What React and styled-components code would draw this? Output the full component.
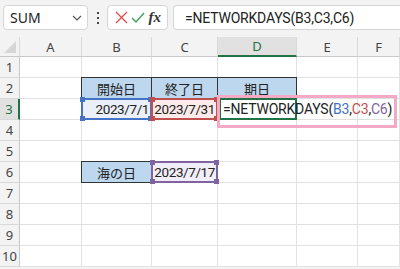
import React from 'react'
import styled, { createGlobalStyle } from 'styled-components'

const Global = createGlobalStyle`
  body { margin: 0; background: #fff; }
  * { box-sizing: border-box; }
`

const Page = styled.div`
  width: 400px;
  height: 269px;
  overflow: hidden;
  background: #f3f3f3;
  font-family: Roboto, 'Noto Sans CJK JP', sans-serif;
  color: #222;
`

const Toolbar = styled.div`
  height: 37px;
  display: flex;
  align-items: center;
  padding: 0 0 2px 3px;
`

const Box = styled.div`
  height: 25px;
  background: #fff;
  border: 1px solid #d6d6d6;
  border-radius: 4px;
  display: flex;
  align-items: center;
`

const NameBox = styled(Box)`
  width: 85px;
  padding: 0 5px 0 6px;
  justify-content: space-between;
  font-size: 14px;
  font-family: 'Noto Sans', sans-serif;
`

const Dots = styled.div`
  width: 19px;
  display: flex;
  flex-direction: column;
  align-items: center;
  gap: 3px;
  span { width: 2px; height: 2px; background: #444; }
`

const FxBox = styled(Box)`
  width: 61px;
  padding: 0 6px 0 7px;
  justify-content: space-between;
`

const Fx = styled.span`
  font-family: 'Liberation Serif', serif;
  font-style: italic;
  font-weight: bold;
  font-size: 15px;
  color: #333;
`

const FormulaBox = styled(Box)`
  flex: 1;
  margin-left: 5px;
  border-right: none;
  border-radius: 4px 0 0 4px;
  padding-left: 11px;
  font-size: 14px;
  letter-spacing: -0.2px;
  color: #222;
`

const Grid = styled.div`
  display: grid;
  grid-template-columns: 20px 62px 70px 66px 79px 61px 42px;
  grid-template-rows: 20px repeat(10, 21px);
  background: #fff;
`

const Corner = styled.div`
  background: #f3f3f3;
  border-right: 1px solid #d8d8d8;
  border-bottom: 1px solid #c8c8c8;
  position: relative;
  &::after {
    content: '';
    position: absolute;
    right: 3px;
    bottom: 3px;
    border-left: 12px solid transparent;
    border-bottom: 12px solid #d6d6d6;
  }
`

const ColHead = styled.div`
  background: ${p => (p.$active ? '#e1e1e1' : '#f3f3f3')};
  border-right: 1px solid #d8d8d8;
  border-bottom: ${p => (p.$active ? '2px solid #217346' : '1px solid #c8c8c8')};
  display: flex;
  align-items: center;
  justify-content: center;
  font-size: 13px;
  font-family: 'Noto Sans', sans-serif;
  color: ${p => (p.$active ? '#217346' : '#444')};
`

const RowHead = styled.div`
  background: ${p => (p.$active ? '#e1e1e1' : '#f3f3f3')};
  border-right: ${p => (p.$active ? '2px solid #217346' : '1px solid #c8c8c8')};
  border-bottom: 1px solid #d8d8d8;
  display: flex;
  align-items: center;
  justify-content: center;
  font-size: 13px;
  font-family: 'Noto Sans', sans-serif;
  color: ${p => (p.$active ? '#217346' : '#444')};
`

const Cell = styled.div`
  border-right: 1px solid #e1e1e1;
  border-bottom: 1px solid #e1e1e1;
  font-size: 14px;
  display: flex;
  align-items: center;
  white-space: nowrap;
  position: relative;
`

const Label = styled(Cell)`
  background: #bdd7ee;
  border: 1px solid #333;
  margin: -1px 0 0 -1px;
  justify-content: center;
  font-size: 13px;
  color: #222;
`

const Ref = styled(Cell)`
  background: ${p => p.$fill};
  border: 2px solid ${p => p.$color};
  margin: -1px 0 0 -1px;
  justify-content: flex-end;
  padding-right: 1px;
  z-index: 2;
  overflow: visible;
  font-size: 13.5px;
  letter-spacing: -0.4px;
`

const Handle = styled.span`
  position: absolute;
  width: 5px;
  height: 5px;
  background: ${p => p.$color};
  ${p => (p.$top ? 'top: -3px;' : 'bottom: -3px;')}
  ${p => (p.$left ? 'left: -3px;' : 'right: -3px;')}
`

const Active = styled(Cell)`
  border: 2px solid #217346;
  margin: -1px 0 0 1px;
  z-index: 3;
  overflow: visible;
  padding-left: 2px;
  font-size: 14px;
  letter-spacing: -0.2px;
  color: #222;
`

const EditBox = styled.div`
  position: absolute;
  left: -4px;
  top: -5px;
  width: 180px;
  height: 33px;
  border: 3px solid #f4a9c4;
  pointer-events: none;
`

const Caret = styled.span`
  display: inline-block;
  width: 1px;
  height: 17px;
  background: #000;
  margin-left: 2px;
`

const Token = styled.span`
  color: ${p => p.$color};
`

const refs = {
  B3: { color: '#4472c4', fill: '#eaeff8' },
  C3: { color: '#c0504d', fill: '#fbeaea' },
  C6: { color: '#8064a2', fill: '#f2eef8' },
}

function RefCell({ id, children }) {
  const { color, fill } = refs[id]
  return (
    <Ref $color={color} $fill={fill}>
      {children}
      <Handle $color={color} $top $left />
      <Handle $color={color} $top />
      <Handle $color={color} $left />
      <Handle $color={color} />
    </Ref>
  )
}

const cols = ['A', 'B', 'C', 'D', 'E', 'F']

function renderRow(r) {
  const out = [<RowHead key={`h${r}`} $active={r === 3}>{r}</RowHead>]
  const push = (c, el) => out.push(React.cloneElement(el, { key: `${c}${r}` }))
  cols.forEach(c => {
    if (r === 2 && c === 'B') return push(c, <Label>開始日</Label>)
    if (r === 2 && c === 'C') return push(c, <Label>終了日</Label>)
    if (r === 2 && c === 'D') return push(c, <Label>期日</Label>)
    if (r === 6 && c === 'B') return push(c, <Label>海の日</Label>)
    if (r === 3 && c === 'B') return push(c, <RefCell id="B3">2023/7/1</RefCell>)
    if (r === 3 && c === 'C') return push(c, <RefCell id="C3">2023/7/31</RefCell>)
    if (r === 6 && c === 'C') return push(c, <RefCell id="C6">2023/7/17</RefCell>)
    if (r === 3 && c === 'D')
      return push(
        c,
        <Active>
          <span>
            =NETWORKDAYS(<Token $color="#4472c4">B3</Token>,<Token $color="#c0504d">C3</Token>,
            <Token $color="#8064a2">C6</Token>)
          </span>
          <Caret />
          <EditBox />
        </Active>
      )
    return push(c, <Cell />)
  })
  return out
}

export default function App() {
  return (
    <Page>
      <Global />
      <Toolbar>
        <NameBox>
          <span>SUM</span>
          <svg width="10" height="6" viewBox="0 0 10 6">
            <path d="M1 1l4 4 4-4" fill="none" stroke="#555" strokeWidth="1.2" />
          </svg>
        </NameBox>
        <Dots>
          <span />
          <span />
          <span />
        </Dots>
        <FxBox>
          <svg width="13" height="13" viewBox="0 0 13 13">
            <path d="M1 1l11 11M12 1L1 12" stroke="#e04b4b" strokeWidth="1.3" />
          </svg>
          <svg width="14" height="12" viewBox="0 0 14 12">
            <path d="M1 6l4 4L13 1" fill="none" stroke="#3aa05a" strokeWidth="1.3" />
          </svg>
          <Fx>fx</Fx>
        </FxBox>
        <FormulaBox>=NETWORKDAYS(B3,C3,C6)</FormulaBox>
      </Toolbar>
      <Grid>
        <Corner />
        {cols.map(c => (
          <ColHead key={c} $active={c === 'D'}>
            {c}
          </ColHead>
        ))}
        {Array.from({ length: 10 }, (_, i) => renderRow(i + 1))}
      </Grid>
    </Page>
  )
}
